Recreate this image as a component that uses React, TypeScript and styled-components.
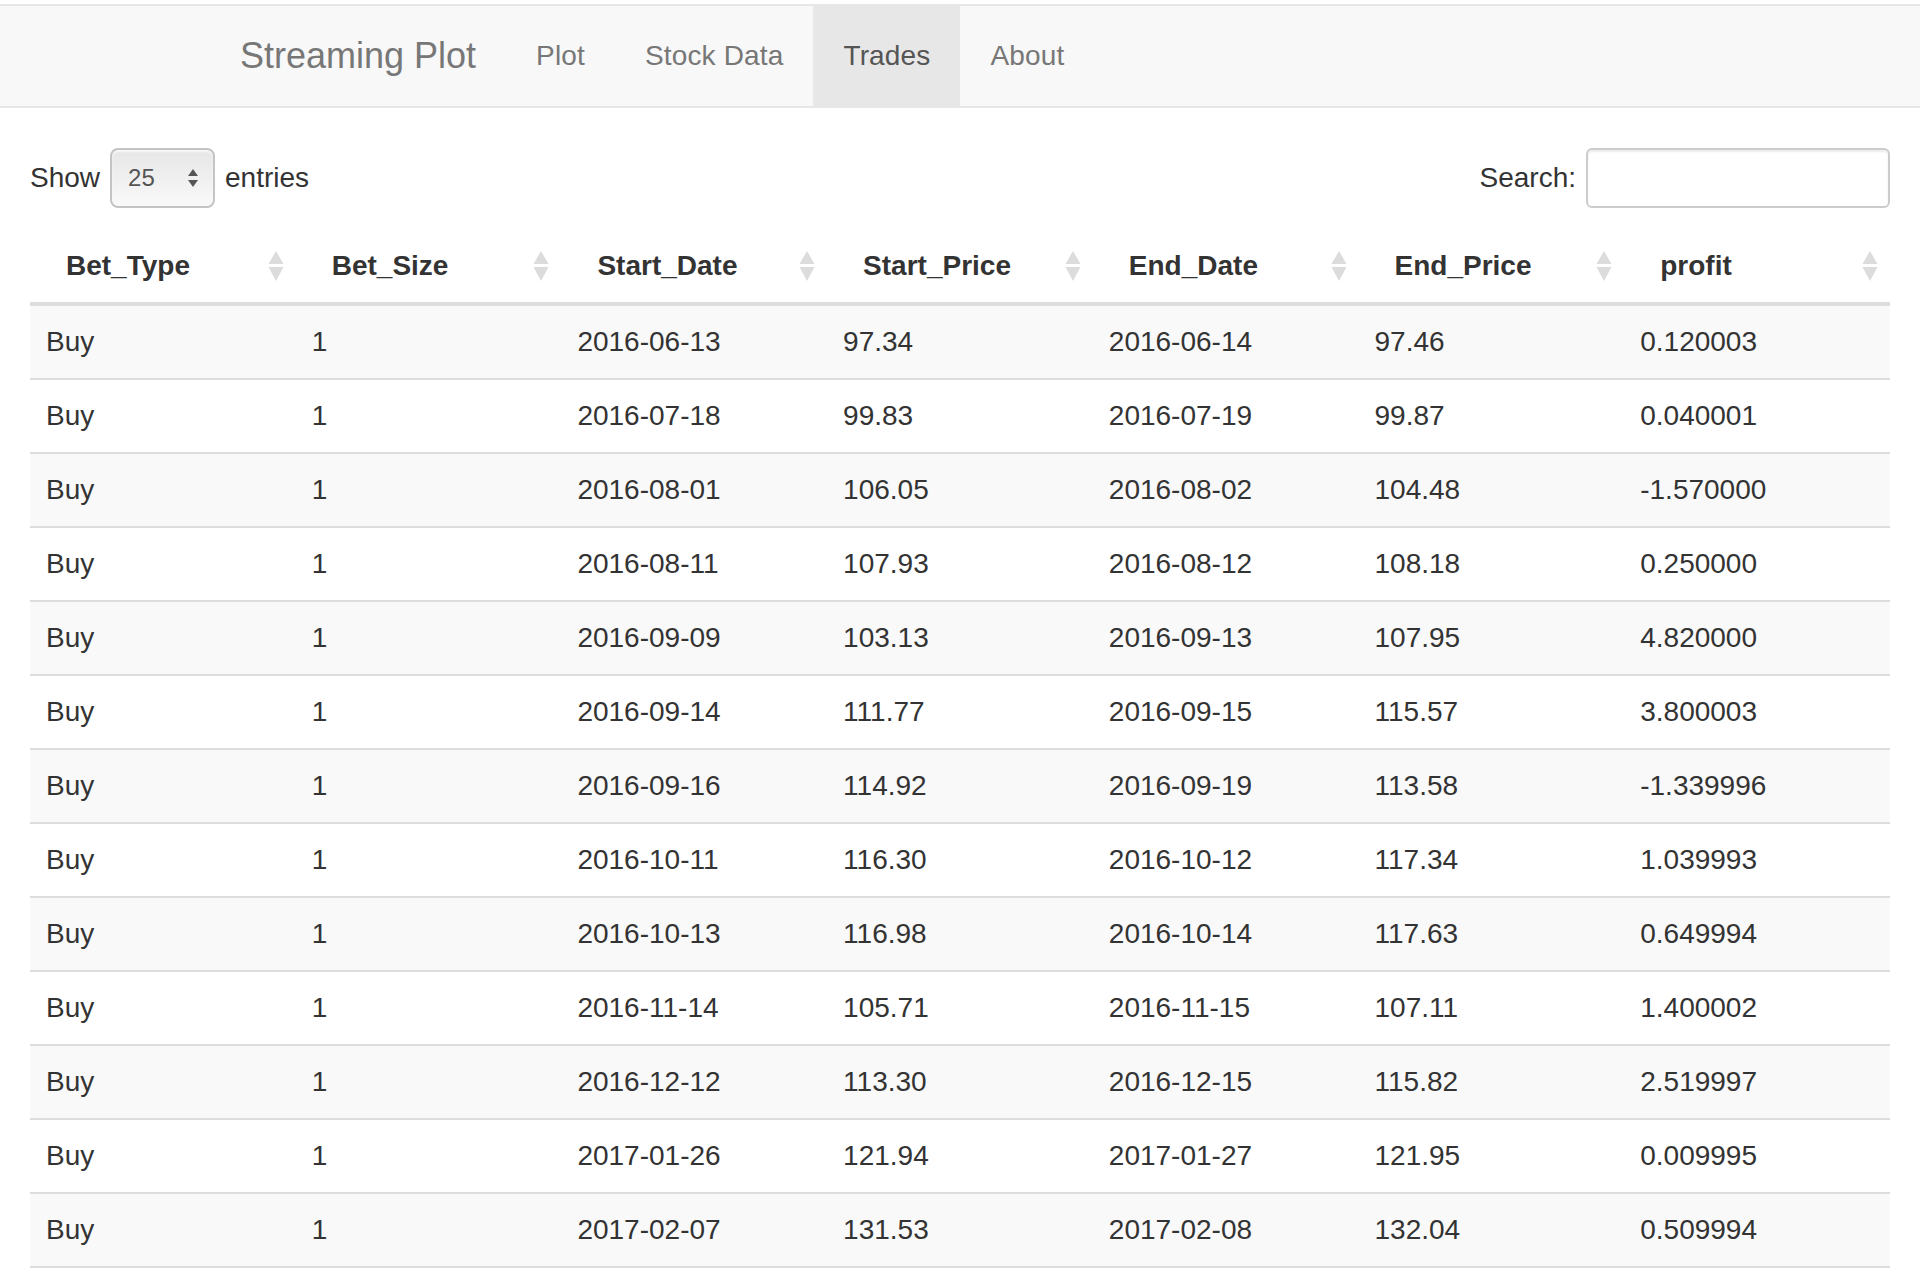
import styled, { createGlobalStyle } from 'styled-components';

type TradeRow = {
  start: string;
  startPrice: string;
  end: string;
  endPrice: string;
  profit: string;
};

const trades: TradeRow[] = [
  { start: '2016-06-13', startPrice: '97.34', end: '2016-06-14', endPrice: '97.46', profit: '0.120003' },
  { start: '2016-07-18', startPrice: '99.83', end: '2016-07-19', endPrice: '99.87', profit: '0.040001' },
  { start: '2016-08-01', startPrice: '106.05', end: '2016-08-02', endPrice: '104.48', profit: '-1.570000' },
  { start: '2016-08-11', startPrice: '107.93', end: '2016-08-12', endPrice: '108.18', profit: '0.250000' },
  { start: '2016-09-09', startPrice: '103.13', end: '2016-09-13', endPrice: '107.95', profit: '4.820000' },
  { start: '2016-09-14', startPrice: '111.77', end: '2016-09-15', endPrice: '115.57', profit: '3.800003' },
  { start: '2016-09-16', startPrice: '114.92', end: '2016-09-19', endPrice: '113.58', profit: '-1.339996' },
  { start: '2016-10-11', startPrice: '116.30', end: '2016-10-12', endPrice: '117.34', profit: '1.039993' },
  { start: '2016-10-13', startPrice: '116.98', end: '2016-10-14', endPrice: '117.63', profit: '0.649994' },
  { start: '2016-11-14', startPrice: '105.71', end: '2016-11-15', endPrice: '107.11', profit: '1.400002' },
  { start: '2016-12-12', startPrice: '113.30', end: '2016-12-15', endPrice: '115.82', profit: '2.519997' },
  { start: '2017-01-26', startPrice: '121.94', end: '2017-01-27', endPrice: '121.95', profit: '0.009995' },
  { start: '2017-02-07', startPrice: '131.53', end: '2017-02-08', endPrice: '132.04', profit: '0.509994' },
];

const columns = ['Bet_Type', 'Bet_Size', 'Start_Date', 'Start_Price', 'End_Date', 'End_Price', 'profit'];

const navLinks = ['Plot', 'Stock Data', 'Trades', 'About'];

const GlobalStyle = createGlobalStyle`
  body {
    margin: 0;
    padding-top: 4px;
    background: #fff;
    font-family: "Liberation Sans", Arial, sans-serif;
    font-size: 28px;
    line-height: 40px;
    color: #333;
  }
  * {
    box-sizing: border-box;
  }
`;

const Navbar = styled.nav`
  background-color: #f8f8f8;
  border-top: 2px solid #e7e7e7;
  border-bottom: 2px solid #e7e7e7;
  margin-bottom: 40px;
`;

const NavContainer = styled.div`
  width: 1500px;
  margin: 0 auto;
  padding: 0 30px;
  display: flex;
  height: 100px;
`;

const Brand = styled.a`
  margin-left: -30px;
  padding: 30px;
  font-size: 36px;
  line-height: 40px;
  color: #777;
  text-decoration: none;
`;

const NavList = styled.ul`
  display: flex;
  margin: 0;
  padding: 0;
  list-style: none;
`;

const NavItem = styled.li<{ active: boolean }>`
  padding: 30px;
  line-height: 40px;
  letter-spacing: 0.15px;
  color: ${(props) => (props.active ? '#555' : '#777')};
  background-color: ${(props) => (props.active ? '#e7e7e7' : 'transparent')};
  cursor: pointer;
`;

const Content = styled.div`
  padding: 0 30px;
`;

const Controls = styled.div`
  display: flex;
  justify-content: space-between;
  align-items: center;
  height: 60px;
`;

const Label = styled.label`
  display: flex;
  align-items: center;
  gap: 10px;
  white-space: nowrap;
`;

const SelectBox = styled.div`
  width: 105px;
  height: 60px;
  border: 2px solid #c4c4c4;
  border-radius: 8px;
  background: linear-gradient(to bottom, #e6e6e6, #f9f9f9);
  box-shadow: inset 0 2px 2px rgba(255, 255, 255, 0.7);
  display: flex;
  align-items: center;
  justify-content: space-between;
  padding: 0 14px 0 16px;
  font-size: 24px;
  color: #555;
`;

const SearchInput = styled.input`
  width: 304px;
  height: 60px;
  border: 2px solid #ccc;
  border-radius: 6px;
  box-shadow: inset 0 2px 2px rgba(0, 0, 0, 0.075);
  padding: 10px 20px;
  font-size: 24px;
  font-family: inherit;
  outline: none;
`;

const Table = styled.table`
  width: 100%;
  margin-top: 22px;
  table-layout: fixed;
  border-collapse: separate;
  border-spacing: 0;
`;

const HeadCell = styled.th`
  position: relative;
  text-align: left;
  font-weight: bold;
  padding: 16px 60px 16px 36px;
  line-height: 40px;
  border-bottom: 4px solid #ddd;
  white-space: nowrap;
  cursor: pointer;
`;

const SortIcon = styled.svg`
  position: absolute;
  right: 12px;
  top: 50%;
  margin-top: -15px;
`;

const Row = styled.tr<{ striped: boolean }>`
  background-color: ${(props) => (props.striped ? '#f9f9f9' : '#fff')};
`;

const Cell = styled.td`
  padding: 16px;
  line-height: 40px;
  white-space: nowrap;

  tr + tr > & {
    border-top: 2px solid #ddd;
  }

  tr:last-child > & {
    border-bottom: 2px solid #ddd;
  }
`;

const SortArrows = () => (
  <SortIcon width="16" height="30" viewBox="0 0 16 30">
    <path d="M8 0 L15.5 13 L0.5 13 Z" fill="#dcdcdc" />
    <path d="M0.5 16 L15.5 16 L8 30 Z" fill="#dcdcdc" />
  </SortIcon>
);

const App = () => {
  return (
    <>
      <GlobalStyle />
      <Navbar>
        <NavContainer>
          <Brand>Streaming Plot</Brand>
          <NavList>
            {navLinks.map((link) => (
              <NavItem key={link} active={link === 'Trades'}>
                {link}
              </NavItem>
            ))}
          </NavList>
        </NavContainer>
      </Navbar>
      <Content>
        <Controls>
          <Label>
            Show
            <SelectBox>
              <span>25</span>
              <svg width="12" height="20" viewBox="0 0 12 20">
                <path d="M6 1 L11 8 L1 8 Z" fill="#555" />
                <path d="M1 12 L11 12 L6 19 Z" fill="#555" />
              </svg>
            </SelectBox>
            entries
          </Label>
          <Label>
            Search:
            <SearchInput type="search" />
          </Label>
        </Controls>
        <Table>
          <thead>
            <tr>
              {columns.map((col) => (
                <HeadCell key={col}>
                  {col}
                  <SortArrows />
                </HeadCell>
              ))}
            </tr>
          </thead>
          <tbody>
            {trades.map((t, i) => (
              <Row key={t.start} striped={i % 2 === 0}>
                <Cell>Buy</Cell>
                <Cell>1</Cell>
                <Cell>{t.start}</Cell>
                <Cell>{t.startPrice}</Cell>
                <Cell>{t.end}</Cell>
                <Cell>{t.endPrice}</Cell>
                <Cell>{t.profit}</Cell>
              </Row>
            ))}
          </tbody>
        </Table>
      </Content>
    </>
  );
};

export default App;
